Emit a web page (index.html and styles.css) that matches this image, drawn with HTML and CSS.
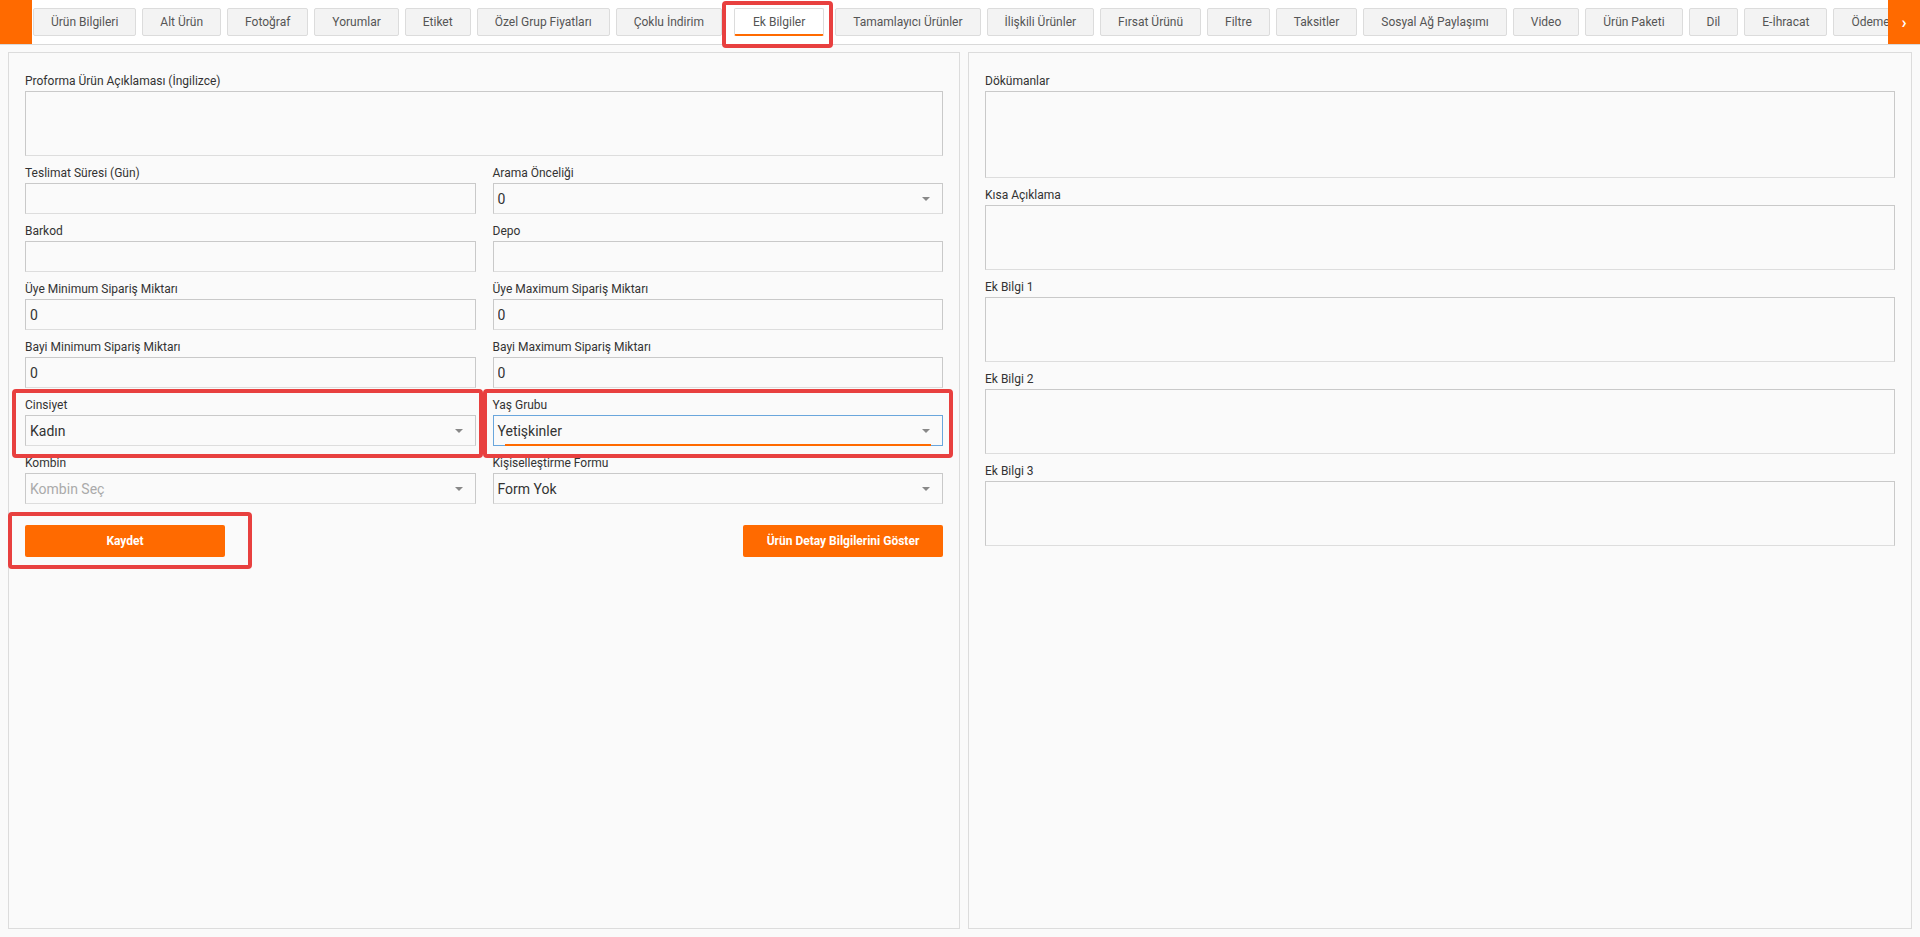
FILE: index.html
```html
<!DOCTYPE html>
<html lang="tr">
<head>
<meta charset="utf-8">
<title>Ek Bilgiler</title>
<link rel="stylesheet" href="styles.css">
</head>
<body>
<header class="tabbar">
  <div class="tabbar__edge"></div>
  <nav class="tabs">
    <a class="tab">Ürün Bilgileri</a>
    <a class="tab">Alt Ürün</a>
    <a class="tab">Fotoğraf</a>
    <a class="tab">Yorumlar</a>
    <a class="tab">Etiket</a>
    <a class="tab">Özel Grup Fiyatları</a>
    <a class="tab">Çoklu İndirim</a>
    <a class="tab tab--active">Ek Bilgiler</a>
    <a class="tab">Tamamlayıcı Ürünler</a>
    <a class="tab">İlişkili Ürünler</a>
    <a class="tab">Fırsat Ürünü</a>
    <a class="tab">Filtre</a>
    <a class="tab">Taksitler</a>
    <a class="tab">Sosyal Ağ Paylaşımı</a>
    <a class="tab">Video</a>
    <a class="tab">Ürün Paketi</a>
    <a class="tab">Dil</a>
    <a class="tab">E-İhracat</a>
    <a class="tab">Ödeme Seçenekleri</a>
  </nav>
  <div class="tabbar__next">›</div>
  <span class="mark mark--tab"></span>
</header>

<main class="page">
  <section class="panel panel--main">
    <div class="field">
      <label class="field__label">Proforma Ürün Açıklaması (İngilizce)</label>
      <textarea class="control control--area"></textarea>
    </div>
    <div class="grid">
      <div class="field">
        <label class="field__label">Teslimat Süresi (Gün)</label>
        <input class="control" type="text" value="">
      </div>
      <div class="field">
        <label class="field__label">Arama Önceliği</label>
        <div class="control select"><span class="select__value">0</span><i class="select__caret"></i></div>
      </div>
      <div class="field">
        <label class="field__label">Barkod</label>
        <input class="control" type="text" value="">
      </div>
      <div class="field">
        <label class="field__label">Depo</label>
        <input class="control" type="text" value="">
      </div>
      <div class="field">
        <label class="field__label">Üye Minimum Sipariş Miktarı</label>
        <input class="control" type="text" value="0">
      </div>
      <div class="field">
        <label class="field__label">Üye Maximum Sipariş Miktarı</label>
        <input class="control" type="text" value="0">
      </div>
      <div class="field">
        <label class="field__label">Bayi Minimum Sipariş Miktarı</label>
        <input class="control" type="text" value="0">
      </div>
      <div class="field">
        <label class="field__label">Bayi Maximum Sipariş Miktarı</label>
        <input class="control" type="text" value="0">
      </div>
      <div class="field">
        <label class="field__label">Cinsiyet</label>
        <div class="control select"><span class="select__value">Kadın</span><i class="select__caret"></i></div>
      </div>
      <div class="field">
        <label class="field__label">Yaş Grubu</label>
        <div class="control select select--focus"><span class="select__value">Yetişkinler</span><i class="select__caret"></i><span class="select__underline"></span></div>
      </div>
      <div class="field">
        <label class="field__label">Kombin</label>
        <div class="control select select--placeholder"><span class="select__value">Kombin Seç</span><i class="select__caret"></i></div>
      </div>
      <div class="field">
        <label class="field__label">Kişiselleştirme Formu</label>
        <div class="control select"><span class="select__value">Form Yok</span><i class="select__caret"></i></div>
      </div>
    </div>
    <div class="actions">
      <button class="btn" type="button">Kaydet</button>
      <button class="btn" type="button">Ürün Detay Bilgilerini Göster</button>
    </div>
    <span class="mark mark--gender"></span>
    <span class="mark mark--age"></span>
    <span class="mark mark--save"></span>
  </section>

  <section class="panel panel--side">
    <div class="field">
      <label class="field__label">Dökümanlar</label>
      <textarea class="control control--tall"></textarea>
    </div>
    <div class="field">
      <label class="field__label">Kısa Açıklama</label>
      <textarea class="control control--area"></textarea>
    </div>
    <div class="field">
      <label class="field__label">Ek Bilgi 1</label>
      <textarea class="control control--area"></textarea>
    </div>
    <div class="field">
      <label class="field__label">Ek Bilgi 2</label>
      <textarea class="control control--area"></textarea>
    </div>
    <div class="field">
      <label class="field__label">Ek Bilgi 3</label>
      <textarea class="control control--area"></textarea>
    </div>
  </section>
</main>
</body>
</html>
```
FILE: styles.css
```css
* { box-sizing: border-box; }

body {
  margin: 0;
  background: #fafafa;
  font-family: Roboto, "Liberation Sans", Arial, sans-serif;
  color: #333;
}

/* ---------- tab bar ---------- */
.tabbar {
  position: relative;
  z-index: 2;
  display: flex;
  height: 45px;
  background: #fff;
  border-bottom: 1px solid #d9d9d9;
}

.tabbar__edge {
  flex: 0 0 32px;
  background: #ff6a00;
}

.tabs {
  flex: 1;
  display: flex;
  align-items: center;
  gap: 6px;
  padding-left: 1px;
  overflow: hidden;
}

.tab {
  flex-shrink: 0;
  height: 28px;
  padding: 0 17px;
  border: 1px solid #dcdcdc;
  border-radius: 2px;
  background: #f3f3f3;
  color: #555;
  font-size: 12px;
  line-height: 26px;
  white-space: nowrap;
  cursor: pointer;
}

.tab--active {
  background: #fff;
  border-bottom: 2px solid #ff6a00;
  padding: 0 18px;
  margin: 0 5px 0 6px;
}

.tabbar__next {
  flex: 0 0 32px;
  background: #ff6a00;
  color: #fff;
  display: flex;
  align-items: center;
  justify-content: center;
  font-size: 17px;
  font-weight: 700;
  line-height: 1;
}

/* ---------- annotation marks ---------- */
.mark {
  position: absolute;
  border: 4px solid #e8403f;
  border-radius: 4px;
  pointer-events: none;
  z-index: 3;
}

.mark--tab { left: 722px; top: 1px; width: 111px; height: 47px; }
.mark--gender { left: 3px; top: 336px; width: 471px; height: 69px; }
.mark--age { left: 474px; top: 336px; width: 470px; height: 69px; }
.mark--save { left: -1px; top: 459px; width: 244px; height: 57px; }

/* ---------- page ---------- */
.page {
  display: flex;
  gap: 8px;
  height: 892px;
  padding: 7px 8px 8px;
}

.panel {
  background: #fafafa;
  border: 1px solid #dcdcdc;
  padding: 20px 16px;
}

.panel--main {
  position: relative;
  flex: 0 0 952px;
}

.panel--side {
  flex: 1;
}

.grid {
  display: grid;
  grid-template-columns: 1fr 1fr;
  column-gap: 17px;
}

.field {
  margin-bottom: 9px;
}

.field__label {
  display: block;
  font-size: 12px;
  line-height: 16px;
  margin-bottom: 2px;
  color: #333;
}

.control {
  display: block;
  width: 100%;
  height: 31px;
  margin: 0;
  padding: 0 4px;
  border: 1px solid #c9c9c9;
  border-bottom-color: #dddddd;
  border-radius: 0;
  background: transparent;
  font-family: Roboto, "Liberation Sans", Arial, sans-serif;
  font-size: 14px;
  color: #333;
  outline: none;
}

textarea.control {
  resize: none;
  padding: 4px;
}

.control--area { height: 65px; }
.control--tall { height: 87px; }

/* ---------- select ---------- */
.select {
  position: relative;
  display: flex;
  align-items: center;
}

.select__value {
  flex: 1;
  white-space: nowrap;
}

.select__caret {
  flex: 0 0 auto;
  width: 0;
  height: 0;
  margin-right: 8px;
  border-left: 4px solid transparent;
  border-right: 4px solid transparent;
  border-top: 4px solid #888;
}

.select--focus {
  border-color: #6aa6dc;
}

.select--placeholder .select__value {
  color: #aaa;
}

.select__underline {
  position: absolute;
  left: 11px;
  right: 11px;
  bottom: -1px;
  height: 2px;
  background: #ff6a00;
}

/* ---------- buttons ---------- */
.actions {
  display: flex;
  justify-content: space-between;
  margin-top: 12px;
}

.btn {
  width: 200px;
  height: 32px;
  border: 0;
  border-radius: 2px;
  background: #ff6a00;
  color: #fff;
  font-family: Roboto, "Liberation Sans", Arial, sans-serif;
  font-size: 12px;
  font-weight: 700;
  cursor: pointer;
}
```
